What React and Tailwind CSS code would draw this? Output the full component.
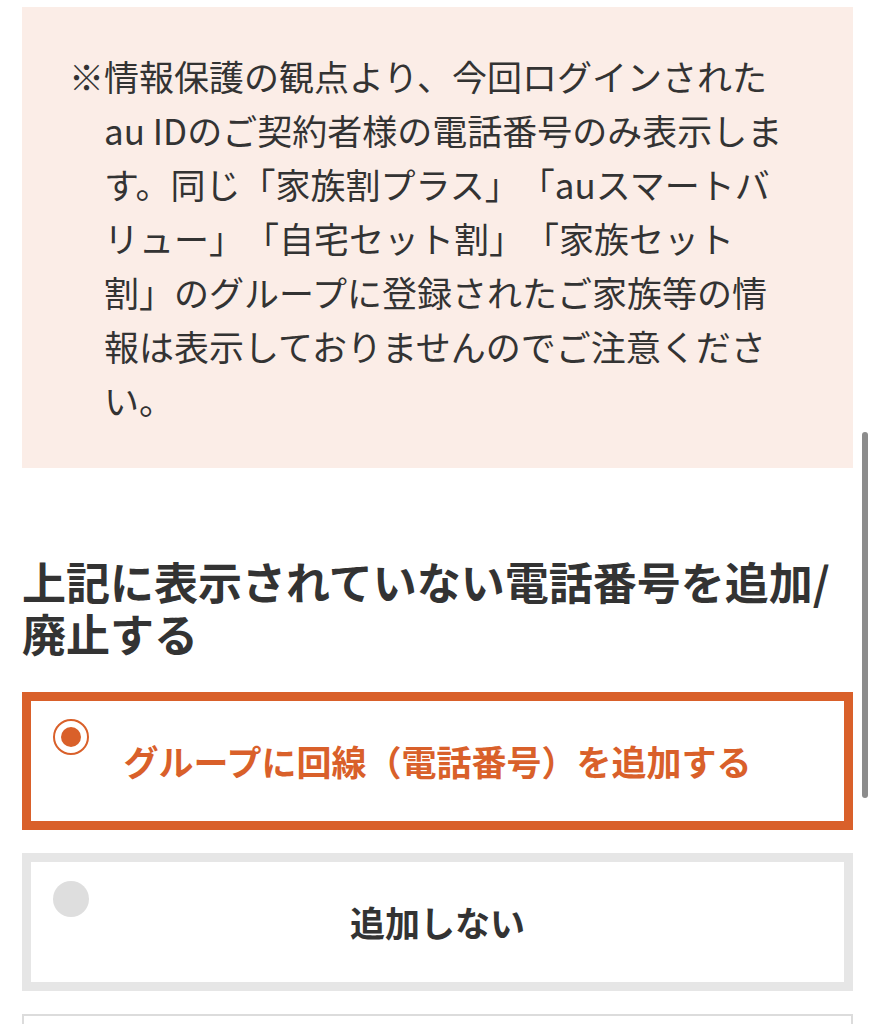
import React from "react"

const font = { fontFamily: '"Noto Sans CJK JP", "Noto Sans", sans-serif' }

const Radio = ({checked}) => {
    if (checked) {
        return (
            <span className="absolute left-[22px] top-[18px] flex h-[36px] w-[36px] items-center justify-center rounded-full border-[2.5px] border-[#d9602a] bg-white">
                <span className="h-[20px] w-[20px] rounded-full bg-[#d9602a]"></span>
            </span>
        )
    }
    return <span className="absolute left-[22px] top-[19px] h-[36px] w-[36px] rounded-full bg-[#dedede]"></span>
}

const Option = ({checked, label, className}) => {
    return (
        <label className={"relative flex h-[138px] items-center justify-center bg-white " + className}>
            <Radio checked={checked}/>
            <span className={"text-[35px] font-bold leading-[54px] " + (checked ? "text-[#d9602a]" : "text-[#333333]")}>
                {label}
            </span>
        </label>
    )
}

const App = () => {
    return (
        <div className="relative h-[1024px] overflow-hidden bg-white px-[22px] text-[#333333] [text-spacing-trim:space-all]" style={font}>
            <div className="mt-[7px] h-[461px] bg-[#fbede7] pt-[42px] pb-[39px] pl-[82px] pr-[58px]">
                <p className="text-[35px] leading-[54px] -indent-[35px]">
                    ※情報保護の観点より、今回ログインされたau IDのご契約者様の電話番号のみ表示します。同じ「家族割プラス」「auスマートバリュー」「自宅セット割」「家族セット割」のグループに登録されたご家族等の情報は表示しておりませんのでご注意ください。
                </p>
            </div>

            <h2 className="mt-[87px] text-[44px] font-bold leading-[52px] text-[#333333]">
                上記に表示されていない電話番号を追加/廃止する
            </h2>

            <div className="mt-[33px] flex flex-col gap-[23px]">
                <Option checked label="グループに回線（電話番号）を追加する" className="border-[9px] border-[#d9602a]"/>
                <Option label="追加しない" className="border-[9px] border-[#e6e6e6]"/>
                <div className="h-[138px] border-2 border-[#dcdcdc] bg-white"></div>
            </div>

            <div className="absolute left-[862px] top-[432px] h-[366px] w-[6px] rounded-full bg-[#8c8c8c]"></div>
        </div>
    )
}

export default App
